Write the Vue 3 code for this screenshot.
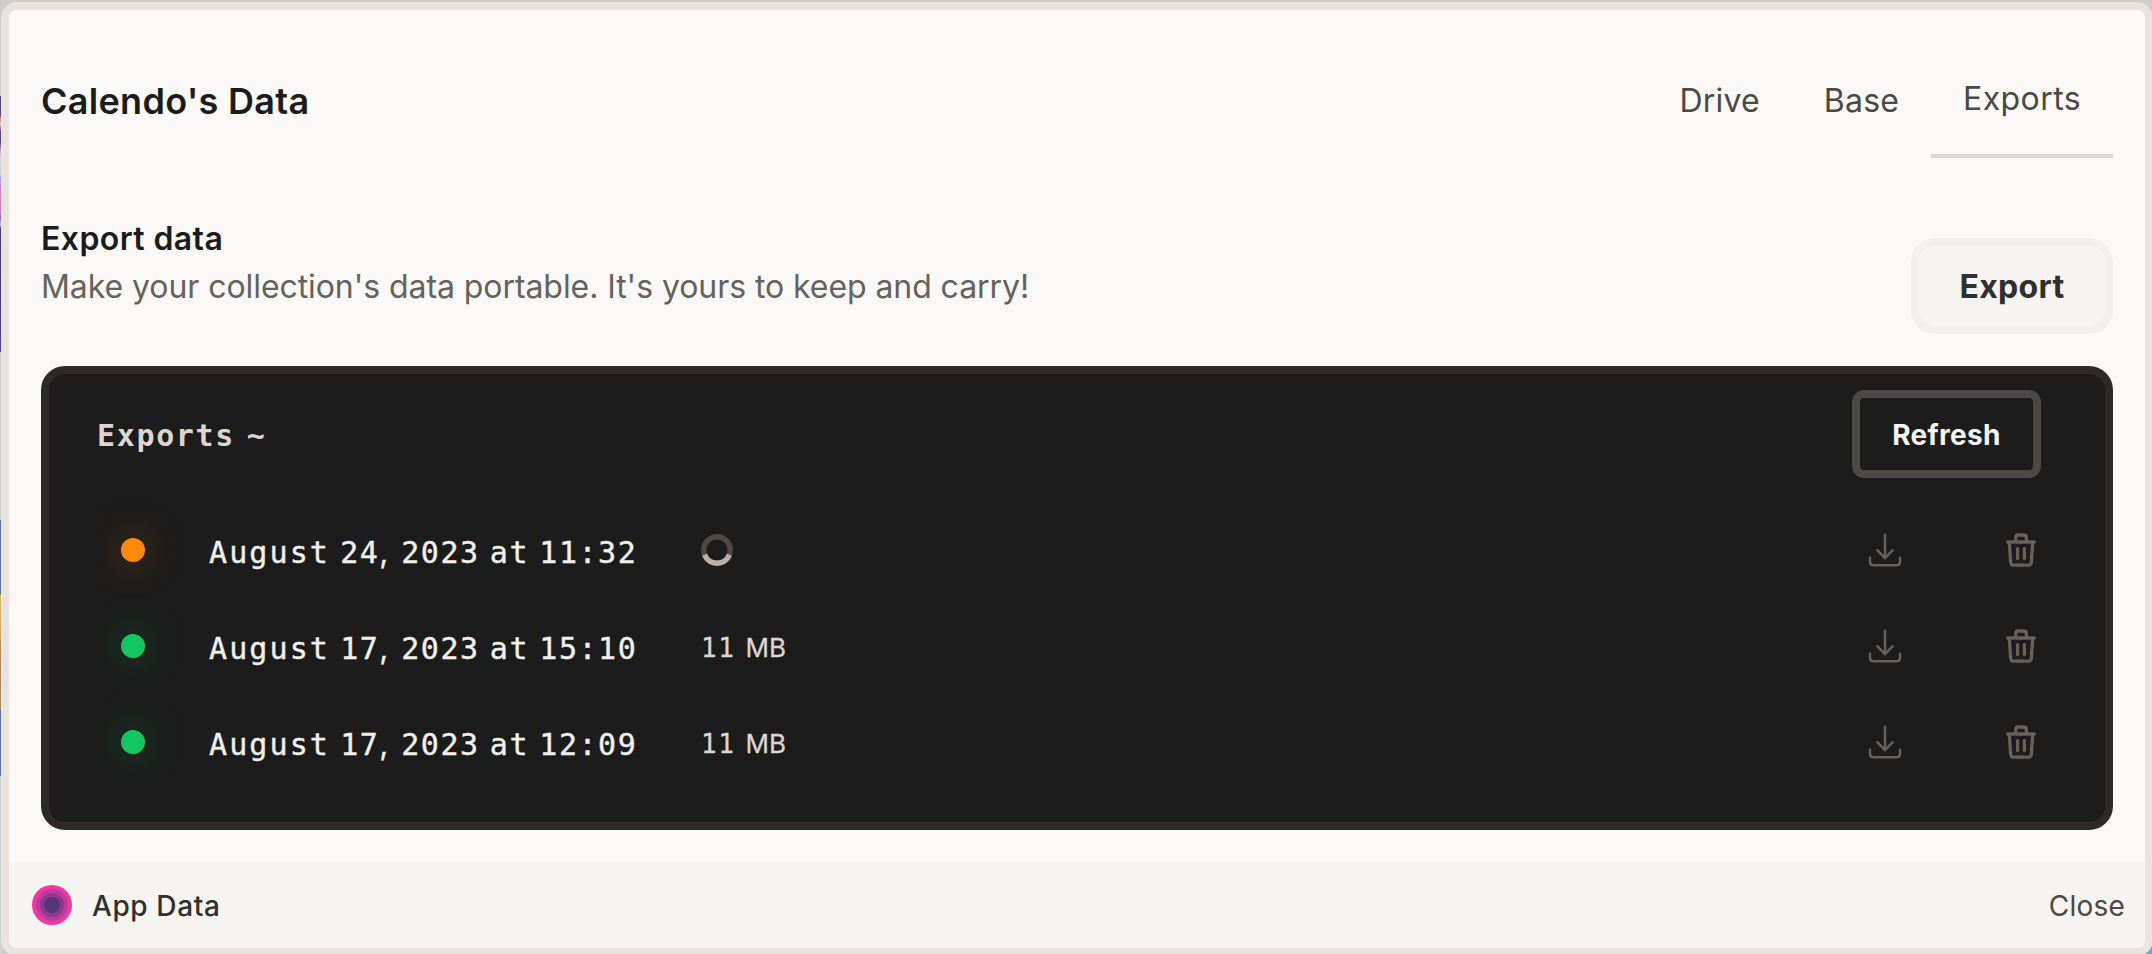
<script setup>
const tabs = [
  { name: 'Drive', active: false },
  { name: 'Base', active: false },
  { name: 'Exports', active: true },
]

const exportsList = [
  { id: 1, month: 'August', day: '24', rest: '2023 at 11:32', status: 'pending', size: null },
  { id: 2, month: 'August', day: '17', rest: '2023 at 15:10', status: 'ready', size: '11' },
  { id: 3, month: 'August', day: '17', rest: '2023 at 12:09', status: 'ready', size: '11' },
]
</script>

<template>
  <div class="backdrop">
    <section class="dialog">
      <header class="header">
        <h1>Calendo's Data</h1>
        <nav class="tabs">
          <a v-for="t in tabs" :key="t.name" class="tab" :class="{ active: t.active }">{{ t.name }}</a>
        </nav>
      </header>

      <div class="intro">
        <div class="intro-text">
          <h2>Export data</h2>
          <p>Make your collection's data portable. It's yours to keep and carry!</p>
        </div>
        <button class="export-btn">Export</button>
      </div>

      <div class="panel">
        <div class="panel-head">
          <span class="panel-title">Exports ~</span>
          <button class="refresh-btn">Refresh</button>
        </div>
        <div class="rows">
          <div v-for="e in exportsList" :key="e.id" class="row">
            <span class="status"><i class="dot" :class="e.status"></i></span>
            <span class="date"><span class="month">{{ e.month }}</span> {{ e.day }}<span class="comma">,</span> {{ e.rest }}</span>
            <span v-if="e.size" class="size"><span class="num">{{ e.size }}</span><span class="unit">MB</span></span>
            <svg v-else class="spinner" width="32" height="32" viewBox="0 0 32 32" fill="none" stroke-width="5.4">
              <circle cx="16" cy="16" r="13.3" stroke="#4d4a46" />
              <path d="M28.4 20.8A13.3 13.3 0 0 1 3.6 20.8" stroke="#b8b1ac" />
            </svg>
            <span class="actions">
              <svg width="34" height="36" viewBox="0 0 34 36" fill="none" stroke="#66615d" stroke-width="2.5" stroke-linecap="round" stroke-linejoin="round">
                <path d="M17 2.7V26.2M9.3 18.2L17 26.2L24.7 18.2M2 25.5V29.5Q2 33.3 5.8 33.3H28.2Q32 33.3 32 29.5V25.5" />
              </svg>
              <svg width="34" height="36" viewBox="0 0 34 36" fill="none" stroke="#66615d" stroke-width="3.3" stroke-linecap="round" stroke-linejoin="round">
                <path d="M3.7 10H30.3M11.7 9.5V5.5Q11.7 3 14.2 3H19.8Q22.3 3 22.3 5.5V9.5M5.3 10.5L6.6 29.8Q6.8 33.2 10 33.2H24Q27.2 33.2 27.4 29.8L28.7 10.5M13.6 16.7V26.5M20.4 16.7V26.5" />
              </svg>
            </span>
          </div>
        </div>
      </div>

      <footer class="footer">
        <span class="brand">
          <svg width="40" height="40" viewBox="0 0 40 40">
            <circle cx="20" cy="20" r="20" fill="#f238a6" />
            <circle cx="20" cy="20" r="16" fill="#c03a9c" />
            <circle cx="20" cy="20" r="12" fill="#8c3a8d" />
            <circle cx="20" cy="20" r="8" fill="#57347a" />
          </svg>
          <span class="label">App Data</span>
        </span>
        <a class="close label">Close</a>
      </footer>
    </section>
  </div>
</template>

<style>
body {
  margin: 0;
  overflow: hidden;
}
</style>

<style scoped>
* {
  box-sizing: border-box;
}
.backdrop {
  width: 2152px;
  height: 954px;
  overflow: hidden;
  padding: 2px 0 0 1px;
  font-family: Inter, sans-serif;
  background:
    linear-gradient(#68a5d0, #68a5d0) right bottom / 10px 10px no-repeat,
    linear-gradient(#d0ccc9 96px, #4e4679 96px 115px, #dc7b83 118px, #d9ced0 124px, #6a3c77 132px, #504484 142px, #c6a0ca 150px, #d4d5d8 158px 174px, #aaa6e6 178px, #d987cf 188px, #d783a8 205px, #c27db5 214px, #7663b8 218px, #c9c6dd 224px, #423b6d 229px, #47427a 320px, #514295 352px, #d0ccc9 352px 520px, #59719c 520px 594px, #d5b869 595px 610px, #d9a454 630px, #c9b66b 636px, #b18c5b 643px, #a9885f 710px, #59719c 710px 776px, #d4d2d0 776px) 0 0 / 1px 100% no-repeat,
    #d0ccc9;
}
.dialog {
  display: flex;
  flex-direction: column;
  width: 2152px;
  height: 954px;
  border: 8px solid #e8e3df;
  border-radius: 16px;
  background: #faf9f7;
  overflow: hidden;
}
.header {
  display: flex;
  justify-content: space-between;
  align-items: center;
  height: 180px;
  padding: 0 32px;
}
h1, h2, p {
  margin: 0;
}
h1 {
  padding-top: 1px;
  font-size: 36px;
  line-height: 44px;
  font-weight: 600;
  letter-spacing: 0.3px;
  color: #1c1c1b;
}
.tabs {
  display: flex;
  align-items: center;
}
.tab {
  padding: 2px 32px 0;
  font-size: 32px;
  line-height: 112px;
  letter-spacing: 0.2px;
  color: #4b4945;
}
.tab.active {
  height: 116px;
  line-height: 110px;
  letter-spacing: 0.4px;
  border-bottom: 4px solid #ddd5cf;
}
.intro {
  display: flex;
  justify-content: space-between;
  align-items: flex-end;
  height: 176px;
  padding: 0 32px 32px;
}
.intro-text {
  padding-bottom: 23px;
}
h2 {
  font-size: 32px;
  line-height: 48px;
  font-weight: 600;
  letter-spacing: 0.4px;
  color: #1c1c1b;
}
p {
  font-size: 32px;
  line-height: 48px;
  letter-spacing: -0.07px;
  color: #66625d;
}
button {
  font-family: inherit;
  padding: 0;
}
.export-btn {
  width: 202px;
  height: 96px;
  border: 8px solid #f0efeb;
  border-radius: 24px;
  background: #f5f4f0;
  padding-top: 1px;
  font-size: 32px;
  font-weight: 700;
  letter-spacing: 0.3px;
  color: #31302e;
}
.panel {
  height: 464px;
  flex: none;
  margin: 0 32px;
  border: 8px solid #2f2a29;
  border-radius: 24px;
  background: #1c1c1c;
}
.panel-head {
  display: flex;
  align-items: center;
  justify-content: space-between;
  height: 120px;
  padding: 0 64px 0 48px;
}
.panel-title {
  padding-top: 2px;
  font-family: "DejaVu Sans Mono", monospace;
  font-weight: 700;
  font-size: 30px;
  letter-spacing: 1.65px;
  word-spacing: -8px;
  color: #ddd5cf;
}
.refresh-btn {
  width: 189px;
  height: 88px;
  border: 8px solid #4b4945;
  border-radius: 12px;
  background: transparent;
  padding-top: 2px;
  font-size: 28px;
  font-weight: 700;
  letter-spacing: 0.3px;
  color: #f5f4f0;
}
.rows {
  margin: 8px 64px 0 48px;
}
.row {
  display: flex;
  align-items: center;
  height: 96px;
}
.status {
  display: flex;
  align-items: center;
  width: 112px;
  height: 96px;
  padding-left: 24px;
  overflow: hidden;
}
.dot {
  width: 24px;
  height: 24px;
  border-radius: 50%;
}
.dot.pending {
  background: #fd890d;
  box-shadow: 0 0 32px rgba(253, 137, 13, 0.2), 0 0 48px 6px rgba(253, 137, 13, 0.12);
}
.dot.ready {
  background: #11c663;
  box-shadow: 0 0 32px rgba(17, 198, 99, 0.2), 0 0 48px 6px rgba(17, 198, 99, 0.12);
}
.date {
  width: 492px;
  padding-top: 3px;
  white-space: nowrap;
  font-family: "DejaVu Sans Mono", monospace;
  font-size: 30px;
  letter-spacing: 1.55px;
  word-spacing: -9.4px;
  color: #f0efeb;
  -webkit-text-stroke: 0.4px #f0efeb;
}
.month {
  letter-spacing: 2.1px;
}
.comma {
  font-family: Inter, sans-serif;
  letter-spacing: 2.9px;
}
.size {
  display: flex;
  align-items: baseline;
  gap: 10px;
  padding-top: 2px;
  color: #ddd5cf;
  -webkit-text-stroke: 0.3px #ddd5cf;
}
.num {
  font-family: "DejaVu Sans Mono", monospace;
  font-size: 26px;
  letter-spacing: 1.6px;
}
.unit {
  font-size: 26px;
  letter-spacing: 0;
}
.actions {
  display: flex;
  gap: 102px;
  margin-left: auto;
  margin-right: 3px;
}
.footer {
  display: flex;
  align-items: center;
  justify-content: space-between;
  height: 86px;
  margin-top: auto;
  padding: 0 20px 0 23px;
  background: #f5f4f0;
  font-size: 28px;
  letter-spacing: 0.4px;
}
.brand {
  display: flex;
  align-items: center;
  gap: 20px;
  font-weight: 500;
  letter-spacing: 0.6px;
  color: #31302e;
}
.label {
  padding-top: 2px;
}
.close {
  letter-spacing: 0.2px;
  color: #4b4945;
}
</style>
